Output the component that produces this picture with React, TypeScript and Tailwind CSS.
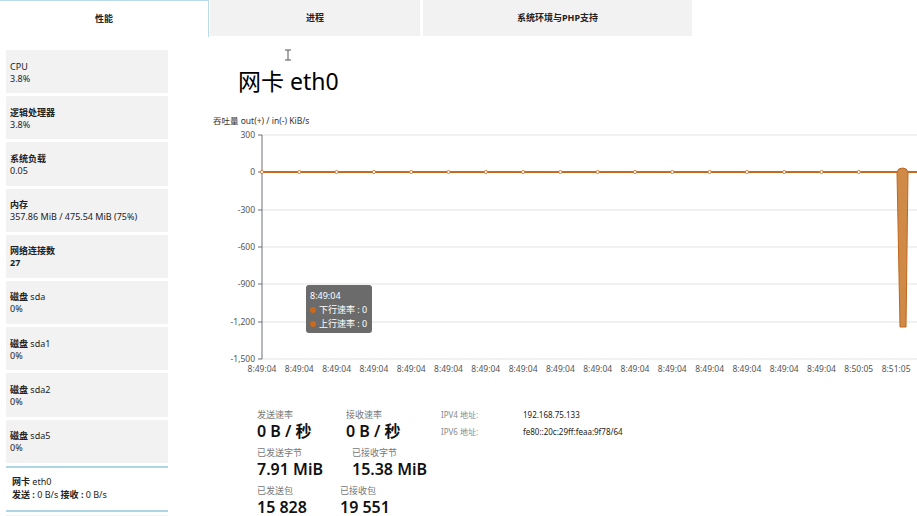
import React from "react";

type Item = { name: React.ReactNode; value: React.ReactNode };

const items: Item[] = [
  { name: <span>CPU</span>, value: "3.8%" },
  { name: <b>逻辑处理器</b>, value: "3.8%" },
  { name: <b>系统负载</b>, value: "0.05" },
  { name: <b>内存</b>, value: "357.86 MiB / 475.54 MiB (75%)" },
  { name: <b>网络连接数</b>, value: <b>27</b> },
  { name: <><b>磁盘</b> sda</>, value: "0%" },
  { name: <><b>磁盘</b> sda1</>, value: "0%" },
  { name: <><b>磁盘</b> sda2</>, value: "0%" },
  { name: <><b>磁盘</b> sda5</>, value: "0%" },
];

const yTicks = [
  { y: 135, label: "300" },
  { y: 172, label: "0" },
  { y: 210, label: "-300" },
  { y: 247, label: "-600" },
  { y: 284, label: "-900" },
  { y: 322, label: "-1,200" },
  { y: 359, label: "-1,500" },
];

const xTicks = Array.from({ length: 18 }, (_, i) => ({
  x: 262 + i * 37.3,
  label: i === 16 ? "8:50:05" : i === 17 ? "8:51:05" : "8:49:04",
}));

function Chart() {
  return (
    <svg width={717} height={265} viewBox="200 110 717 265" className="block">
      <text x={213} y={124} fontSize={8.5} fill="#333">吞吐量 out(+) / in(-) KiB/s</text>
      {yTicks.map((t) => (
        <g key={t.label}>
          <line x1={262} x2={917} y1={t.y} y2={t.y} stroke="#e3e3e3" strokeWidth={1} />
          <line x1={258} x2={262} y1={t.y} y2={t.y} stroke="#6e7079" strokeWidth={1} />
          <text x={255} y={t.y + 3} fontSize={8.5} fill="#555" textAnchor="end">{t.label}</text>
        </g>
      ))}
      <line x1={262} x2={262} y1={135} y2={359} stroke="#6e7079" strokeWidth={1} />
      {xTicks.map((t, i) => (
        <text key={i} x={t.x} y={372} fontSize={8.5} fill="#555" textAnchor="middle">{t.label}</text>
      ))}
      <path d="M897,172 Q898,168 902.5,168 Q907,168 908,172 L906,327 L900,327 Z" fill="#cf8a48" stroke="#c0661a" strokeWidth={1} />
      <path d="M262,172 L897,172 M908,172 L917,172" stroke="#c8691c" strokeWidth={2} fill="none" />
      {xTicks.slice(0, 17).map((t, i) => (
        <circle key={i} cx={t.x} cy={172} r={1.6} fill="#fff" stroke="#c8691c" strokeWidth={0.8} />
      ))}
    </svg>
  );
}

function Stat({ label, value, className }: { label: string; value: string; className?: string }) {
  return (
    <div className={className}>
      <div className="text-[9px] leading-[12px] text-[#777]">{label}</div>
      <div className="text-[16px] leading-[20px] font-semibold text-[#111] whitespace-nowrap">{value}</div>
    </div>
  );
}

export default function App() {
  return (
    <div className="relative w-[917px] h-[516px] overflow-hidden bg-white text-[#222] font-['Noto_Sans','Noto_Sans_CJK_SC',sans-serif]">
      <div className="flex h-[37px] text-[9px] font-bold">
        <div className="w-[209px] border-r border-t border-[#b9dbea] flex items-center justify-center">性能</div>
        <div className="ml-[1px] w-[210px] h-[36px] bg-[#f2f2f2] flex items-center justify-center">进程</div>
        <div className="ml-[3px] w-[269px] h-[36px] bg-[#f2f2f2] flex items-center justify-center">系统环境与PHP支持</div>
      </div>
      <div className="flex">
        <div className="w-[168px] pl-[6px] pt-[13px] flex flex-col gap-[3px] shrink-0">
          {items.map((it, i) => (
            <div key={i} className="h-[43.2px] bg-[#f2f2f2] pl-[4px] pt-[10.5px] text-[9px] leading-[12px]">
              <div>{it.name}</div>
              <div>{it.value}</div>
            </div>
          ))}
          <div className="h-[46px] border-y-2 border-[#add5e6] bg-white pl-[6px] pt-[7px] text-[9px] leading-[13px]">
            <div><b>网卡</b> eth0</div>
            <div><b>发送 :</b> 0 B/s <b>接收 :</b> 0 B/s</div>
          </div>
          <div className="h-[20px] bg-[#f2f2f2]" />
        </div>
        <div className="relative ml-[32px] flex-1 pt-[28px]">
          <h1 className="ml-[38px] text-[23px] leading-[32px] text-black">网卡 eth0</h1>
          <div className="relative mt-[13px]">
            <Chart />
            <div className="absolute left-[106px] top-[175px] w-[66px] h-[48px] rounded-[3px] bg-[#6b6b6b] px-[4px] pt-[4px] text-[9px] leading-[14px] text-white">
              <div>8:49:04</div>
              <div className="flex items-center gap-[3px]"><span className="inline-block w-[6px] h-[6px] rounded-full bg-[#c8691c]" />下行速率 : 0</div>
              <div className="flex items-center gap-[3px]"><span className="inline-block w-[6px] h-[6px] rounded-full bg-[#c8691c]" />上行速率 : 0</div>
            </div>
          </div>
          <div className="ml-[57px] mt-[34px] flex">
            <div className="w-[184px] flex flex-col gap-[6px]">
              <div className="flex">
                <Stat className="w-[89px]" label="发送速率" value="0 B / 秒" />
                <Stat label="接收速率" value="0 B / 秒" />
              </div>
              <div className="flex">
                <Stat className="w-[95px]" label="已发送字节" value="7.91 MiB" />
                <Stat label="已接收字节" value="15.38 MiB" />
              </div>
              <div className="flex">
                <Stat className="w-[83px]" label="已发送包" value="15 828" />
                <Stat label="已接收包" value="19 551" />
              </div>
            </div>
            <div className="grid grid-cols-[82px_auto] gap-y-[5px] text-[8px] leading-[12px] h-fit">
              <div className="text-[#888]">IPV4 地址:</div>
              <div className="text-[#222]">192.168.75.133</div>
              <div className="text-[#888]">IPV6 地址:</div>
              <div className="text-[#222]">fe80::20c:29ff:feaa:9f78/64</div>
            </div>
          </div>
          <svg className="absolute left-[84px] top-[12px]" width={8} height={12} viewBox="0 0 8 12">
            <path d="M1,1 H7 M4,1 V11 M1,11 H7" stroke="#555" strokeWidth={1} fill="none" />
          </svg>
        </div>
      </div>
    </div>
  );
}
